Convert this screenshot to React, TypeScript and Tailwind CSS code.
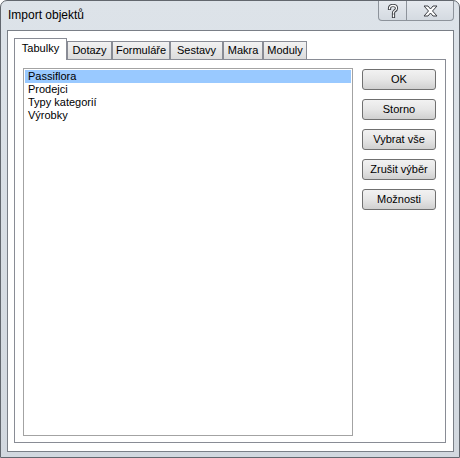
import React from "react";

const font = { fontFamily: '"Liberation Sans", Arial, sans-serif' };

const tabs = ["Tabulky", "Dotazy", "Formuláře", "Sestavy", "Makra", "Moduly"];
const tabWidths = ["w-[53px]", "w-[45px]", "w-[58px]", "w-[53px]", "w-[40px]", "w-[44px]"];
const items = ["Passiflora", "Prodejci", "Typy kategorií", "Výrobky"];
const buttons = ["OK", "Storno", "Vybrat vše", "Zrušit výběr", "Možnosti"];

const HelpIcon = () => (
  <svg width="12" height="14" viewBox="0 0 12 14">
    <path
      d="M2.5 4.5 Q2.5 1.5 6 1.5 Q9.5 1.5 9.5 4.3 Q9.5 6 7.5 7 Q6.5 7.6 6.5 9 M6.5 11 v1.6"
      fill="none"
      stroke="#3c3f44"
      strokeWidth="3.2"
      strokeLinecap="square"
    />
    <path
      d="M2.5 4.5 Q2.5 1.5 6 1.5 Q9.5 1.5 9.5 4.3 Q9.5 6 7.5 7 Q6.5 7.6 6.5 9 M6.5 11 v1.6"
      fill="none"
      stroke="#ffffff"
      strokeWidth="1.3"
      strokeLinecap="square"
    />
  </svg>
);

const CloseIcon = () => (
  <svg width="15" height="12" viewBox="0 0 15 12">
    <polygon
      points="1,1 5,1 7.5,4 10,1 14,1 9.5,6 14,11 10,11 7.5,8 5,11 1,11 5.5,6"
      fill="#ffffff"
      stroke="#3c3f44"
      strokeWidth="1"
      strokeLinejoin="miter"
    />
  </svg>
);

export default function App() {
  return (
    <div className="w-[460px] h-[458px] bg-white" style={font}>
      <div className="flex h-[458px] w-[460px] flex-col rounded-t-[7px] border border-[#62676e] bg-gradient-to-b from-[#dde3e9] to-[#d2d8df] pl-[6px] pr-[5px] pb-[5px]">
        <div className="flex h-[29px] items-start justify-between">
          <span className="mt-[7px] pl-px text-[12px] leading-[14px] text-black">Import objektů</span>
          <div className="flex">
            <div className="flex h-[20px] w-[29px] items-center justify-center rounded-bl-[4px] border border-t-0 border-[#8d939b] bg-gradient-to-b from-[#e6eaef] to-[#d4dae1]">
              <HelpIcon />
            </div>
            <div className="flex h-[20px] w-[47px] items-center justify-center rounded-br-[4px] border border-l-0 border-t-0 border-[#8d939b] bg-gradient-to-b from-[#e6eaef] to-[#d4dae1]">
              <CloseIcon />
            </div>
          </div>
        </div>
        <div className="flex flex-1 flex-col border border-[#7a7f87] bg-white pl-[6px] pr-[7px] pt-[7px] pb-[8px]">
          <div className="flex h-[21px] items-end">
            {tabs.map((t, i) =>
              i === 0 ? (
                <div
                  key={t}
                  className={`relative z-10 -mb-px flex h-[22px] ${tabWidths[i]} items-start justify-center border border-b-0 border-[#898c95] bg-white pt-[3px] text-[11px] leading-[13px] text-black`}
                >
                  {t}
                </div>
              ) : (
                <div
                  key={t}
                  className={`flex h-[18px] ${tabWidths[i]} items-center justify-center border border-b-0 border-[#898c95] bg-gradient-to-b from-[#f2f2f2] to-[#dcdcdc] text-[11px] leading-[13px] text-black`}
                >
                  {t}
                </div>
              )
            )}
          </div>
          <div className="flex flex-1 gap-[9px] border border-[#898c95] bg-white pl-[8px] pt-[8px] pb-[6px]">
            <div className="flex h-[368px] w-[330px] flex-col border border-[#a3a3a3] bg-white px-px pt-px">
              {items.map((it, i) => (
                <div
                  key={it}
                  className={`h-[13px] pl-[3px] text-[11px] leading-[13px] text-black ${i === 0 ? "bg-[#99c9ff]" : ""}`}
                >
                  {it}
                </div>
              ))}
            </div>
            <div className="flex flex-col gap-[9px] pt-px">
              {buttons.map((b) => (
                <div
                  key={b}
                  className="flex h-[21px] w-[74px] items-center justify-center rounded-[3px] border border-[#707070] bg-gradient-to-b from-[#f2f2f2] via-[#e6e6e6] to-[#d0d0d0] text-[11px] leading-[13px] text-black"
                >
                  {b}
                </div>
              ))}
            </div>
          </div>
        </div>
      </div>
    </div>
  );
}
